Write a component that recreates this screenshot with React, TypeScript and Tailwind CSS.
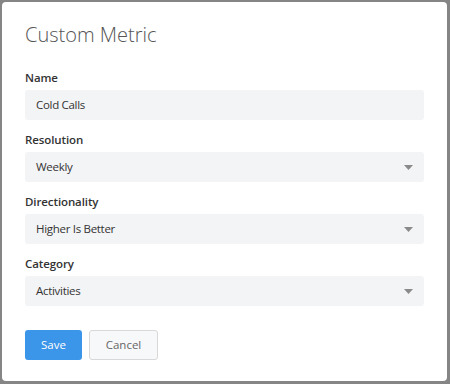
import React from "react";

function Caret() {
  return (
    <svg width="9" height="5" viewBox="0 0 9 5" className="shrink-0">
      <path d="M0 0 H9 L4.5 5 Z" fill="#8a8a8a" />
    </svg>
  );
}

function Field({ label, value, select }: { label: string; value: string; select?: boolean }) {
  return (
    <div className="flex flex-col">
      <div className="h-[18px] leading-[18px] text-[11.5px] font-semibold text-[#333] tracking-[-0.1px]">{label}</div>
      <div className="mt-[3px] h-[30px] rounded-[3px] bg-[#f3f4f6] flex items-center justify-between pl-[11px] pr-[11px] text-[11.5px] tracking-[-0.3px] text-[#333]">
        <span>{value}</span>
        {select && <Caret />}
      </div>
    </div>
  );
}

export default function App() {
  return (
    <div className="w-[450px] h-[384px] bg-[#858585] pl-[2px] pt-[2px] pr-[3px] pb-[3px]" style={{ fontFamily: '"Open Sans", sans-serif' }}>
      <div className="w-full h-full bg-white rounded-[4px] px-[23px] pt-[18px]">
        <div className="text-[20px] font-light text-[#555] leading-[30px]">Custom Metric</div>
        <div className="mt-[19px] flex flex-col gap-[11px]">
          <Field label="Name" value="Cold Calls" />
          <Field label="Resolution" value="Weekly" select />
          <Field label="Directionality" value="Higher Is Better" select />
          <Field label="Category" value="Activities" select />
        </div>
        <div className="mt-[24px] flex gap-[7px]">
          <button className="h-[30px] w-[57px] rounded-[3px] bg-[#3b95e9] text-white text-[11.5px]">Save</button>
          <button className="h-[30px] w-[69px] rounded-[3px] bg-[#f7f8f9] border border-[#d8d8d8] text-[#666] text-[11.5px]">Cancel</button>
        </div>
      </div>
    </div>
  );
}
